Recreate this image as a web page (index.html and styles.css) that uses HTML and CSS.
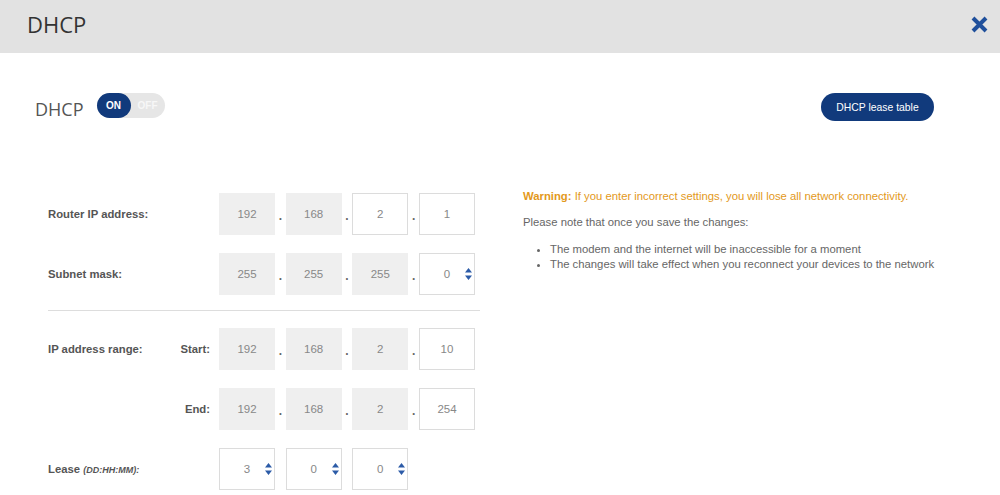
FILE: index.html
```html
<!DOCTYPE html>
<html lang="en">
<head>
    <meta charset="UTF-8">
    <title>DHCP</title>
    <link rel="stylesheet" href="styles.css">
</head>
<body>
    <header class="topbar">
        <h1>DHCP</h1>
        <button class="close" aria-label="Close">
            <svg width="17" height="17" viewBox="0 0 17 17"><path d="M2 2 L15 15 M15 2 L2 15" stroke="#1f4f9b" stroke-width="4" stroke-linecap="butt"/></svg>
        </button>
    </header>

    <main class="page">
        <div class="toolbar">
            <div class="switch-wrap">
                <h2>DHCP</h2>
                <div class="toggle"><span class="on">ON</span><span class="off">OFF</span></div>
            </div>
            <button class="lease-btn">DHCP lease table</button>
        </div>

        <div class="content">
            <div class="form">
                <div class="row">
                    <span class="label">Router IP address:</span>
                    <span class="sub"></span>
                    <div class="fields">
                        <span class="octet">192</span><span class="dot">.</span>
                        <span class="octet">168</span><span class="dot">.</span>
                        <span class="octet edit">2</span><span class="dot">.</span>
                        <span class="octet edit">1</span>
                    </div>
                </div>
                <div class="row">
                    <span class="label">Subnet mask:</span>
                    <span class="sub"></span>
                    <div class="fields">
                        <span class="octet">255</span><span class="dot">.</span>
                        <span class="octet">255</span><span class="dot">.</span>
                        <span class="octet">255</span><span class="dot">.</span>
                        <span class="octet edit spin">0<svg viewBox="0 0 7 12"><path d="M3.5 0 L7 4.5 H0 Z M0 7.5 H7 L3.5 12 Z"/></svg></span>
                    </div>
                </div>

                <div class="divider"></div>

                <div class="row">
                    <span class="label">IP address range:</span>
                    <span class="sub">Start:</span>
                    <div class="fields">
                        <span class="octet">192</span><span class="dot">.</span>
                        <span class="octet">168</span><span class="dot">.</span>
                        <span class="octet">2</span><span class="dot">.</span>
                        <span class="octet edit">10</span>
                    </div>
                </div>
                <div class="row">
                    <span class="label"></span>
                    <span class="sub">End:</span>
                    <div class="fields">
                        <span class="octet">192</span><span class="dot">.</span>
                        <span class="octet">168</span><span class="dot">.</span>
                        <span class="octet">2</span><span class="dot">.</span>
                        <span class="octet edit">254</span>
                    </div>
                </div>
                <div class="row">
                    <span class="label">Lease <em>(DD:HH:MM):</em></span>
                    <span class="sub"></span>
                    <div class="fields">
                        <span class="octet edit spin">3<svg viewBox="0 0 7 12"><path d="M3.5 0 L7 4.5 H0 Z M0 7.5 H7 L3.5 12 Z"/></svg></span><span class="dot"></span>
                        <span class="octet edit spin">0<svg viewBox="0 0 7 12"><path d="M3.5 0 L7 4.5 H0 Z M0 7.5 H7 L3.5 12 Z"/></svg></span><span class="dot"></span>
                        <span class="octet edit spin">0<svg viewBox="0 0 7 12"><path d="M3.5 0 L7 4.5 H0 Z M0 7.5 H7 L3.5 12 Z"/></svg></span>
                    </div>
                </div>
            </div>

            <div class="notes">
                <p class="warning"><strong>Warning:</strong> If you enter incorrect settings, you will lose all network connectivity.</p>
                <p>Please note that once you save the changes:</p>
                <ul>
                    <li>The modem and the internet will be inaccessible for a moment</li>
                    <li>The changes will take effect when you reconnect your devices to the network</li>
                </ul>
            </div>
        </div>
    </main>
</body>
</html>
```

FILE: styles.css
```css
body {
    margin: 0;
    font-family: "Liberation Sans", Arial, sans-serif;
    background: #fff;
    color: #555;
    overflow: hidden;
}
.topbar {
    height: 53px;
    background: #e2e2e2;
    display: flex;
    align-items: center;
    justify-content: space-between;
    padding: 0 12px 0 27px;
}
.topbar h1 {
    margin: 0;
    font-family: "Open Sans", sans-serif;
    font-weight: 400;
    font-size: 22px;
    color: #333;
    margin-top: -6px;
}
.close {
    background: none;
    border: 0;
    padding: 0;
    width: 17px;
    height: 17px;
    margin-top: -5px;
    cursor: pointer;
}
.close svg { display: block; }

.page {
    padding: 0 66px 0 35px;
}
.toolbar {
    display: flex;
    align-items: center;
    justify-content: space-between;
    margin-top: 40px;
    height: 28px;
}
.switch-wrap {
    display: flex;
    align-items: center;
    gap: 13px;
}
.switch-wrap h2 {
    margin: 0;
    font-family: "Open Sans", sans-serif;
    font-weight: 400;
    font-size: 18px;
    color: #555;
    margin-top: 3px;
}
.toggle {
    display: flex;
    width: 68px;
    height: 25px;
    border-radius: 13px;
    background: #e6e6e6;
    font-size: 10px;
    font-weight: 700;
    margin-top: -3px;
}
.toggle span {
    width: 34px;
    display: flex;
    align-items: center;
    justify-content: center;
    border-radius: 13px;
}
.toggle .on { background: #113a7c; color: #fff; }
.toggle .off { color: #f7f7f7; }
.lease-btn {
    background: #113a7c;
    color: #fff;
    border: 0;
    border-radius: 14px;
    width: 113px;
    height: 28px;
    font-family: "Liberation Sans", Arial, sans-serif;
    font-size: 10.4px;
    padding: 0;
}

.content {
    display: flex;
    margin-top: 66px;
    margin-right: -60px;
}
.form {
    flex-shrink: 0;
    width: 432px;
    margin-left: 13px;
    padding-top: 6px;
}
.row {
    display: grid;
    grid-template-columns: 120px 42px 1fr;
    align-items: center;
    height: 42px;
}
.row + .row { margin-top: 18px; }
.label, .sub {
    font-size: 11.3px;
    font-weight: 700;
    color: #555;
}
.label em {
    font-size: 9px;
}
.sub { text-align: right; }
.fields {
    display: flex;
    margin-left: 9px;
}
.octet {
    position: relative;
    box-sizing: border-box;
    width: 56px;
    height: 42px;
    background: #efefef;
    border: 1px solid #efefef;
    display: flex;
    align-items: center;
    justify-content: center;
    font-size: 11.5px;
    color: #888;
}
.octet.edit {
    background: #fff;
    border-color: #dcdcdc;
}
.octet svg {
    position: absolute;
    right: 2px;
    top: 14px;
    width: 7px;
    height: 12px;
    fill: #2c5ba7;
}
.dot {
    width: 10.67px;
    text-align: center;
    font-size: 12px;
    font-weight: 700;
    color: #666;
    align-self: center;
    padding-top: 4px;
}
.divider {
    height: 1px;
    background: #ddd;
    margin: 15px 0 17px;
}

.notes {
    flex: 1;
    margin-left: 43px;
    padding-top: 2px;
    font-size: 11.3px;
    color: #666;
}
.notes p {
    margin: 0 0 11px;
    line-height: 15px;
}
.notes p + p { margin-bottom: 12px; }
.notes .warning { color: #e3991b; }
.notes ul {
    margin: 0;
    padding-left: 27px;
    line-height: 15px;
}
```
